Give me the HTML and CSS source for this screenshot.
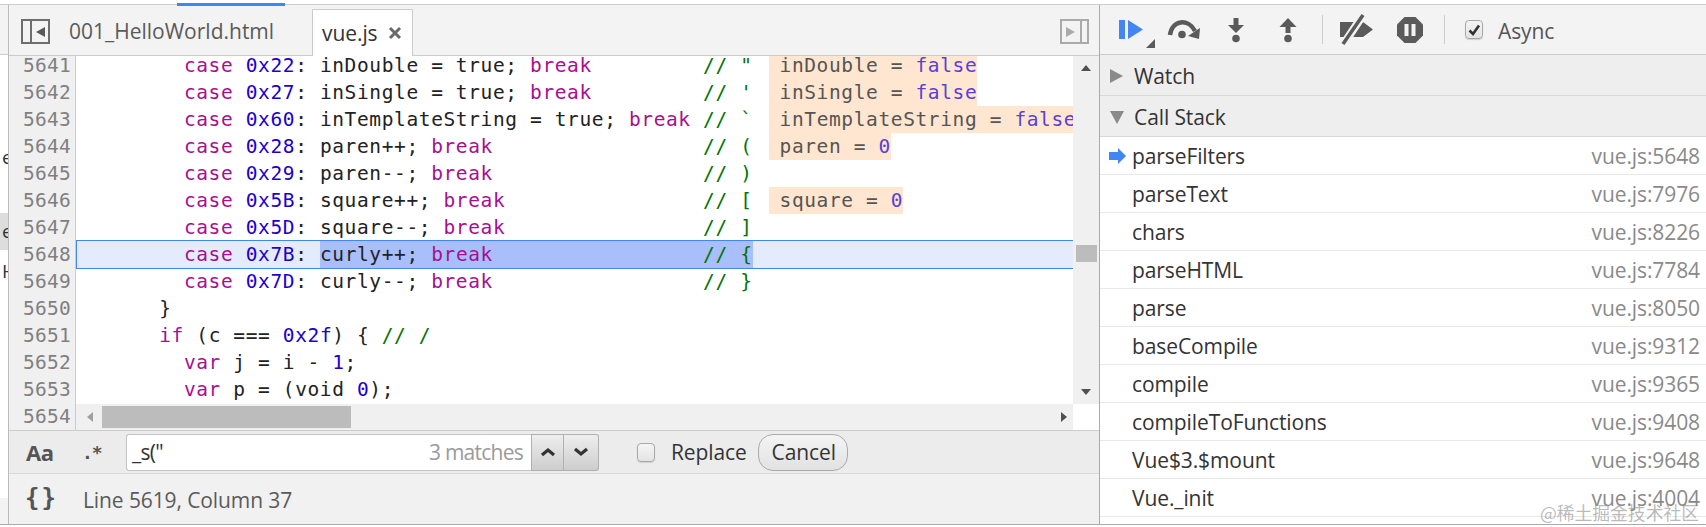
FILE: index.html
```html
<!DOCTYPE html>
<html lang="en">
<head>
  <meta charset="UTF-8" />
  <title>Sources - vue.js</title>
  <link rel="stylesheet" href="styles.css">
</head>
<body>

  <div class="devtabs"><div class="devtab-active"></div></div>

  <div class="main">
    <div class="navigator">
      <div class="nav-head"></div>
      <div class="nav-row nav-row-1">e</div>
      <div class="nav-row nav-row-2">e</div>
      <div class="nav-row nav-row-3">H</div>
      <div class="nav-foot"></div>
    </div>

    <div class="editor">
      <div class="tabbar">
        <svg class="pane-toggle" width="30" height="26" viewBox="0 0 30 26">
          <rect x="1" y="1" width="27" height="23" fill="none" stroke="#6e6e6e" stroke-width="2"/>
          <rect x="9" y="1" width="2" height="23" fill="#6e6e6e"/>
          <polygon points="24,8 24,18 15,13" fill="#5a5a5a"/>
        </svg>
        <div class="file-tab">001_HelloWorld.html</div>
        <div class="file-tab file-tab-active">vue.js
          <svg class="tab-close" width="14" height="14" viewBox="0 0 14 14">
            <path d="M2 2 L12 12 M12 2 L2 12" stroke="#6b6b6b" stroke-width="3"/>
          </svg>
        </div>
        <svg class="pane-toggle pane-toggle-right" width="30" height="26" viewBox="0 0 30 26">
          <rect x="1" y="1" width="27" height="23" fill="none" stroke="#aaa" stroke-width="2"/>
          <rect x="20" y="1" width="2" height="23" fill="#aaa"/>
          <polygon points="6,8 6,18 15,13" fill="#aaa"/>
        </svg>
      </div>

      <div class="source">
        <div class="gutter">
          <div>5641</div><div>5642</div><div>5643</div><div>5644</div><div>5645</div>
          <div>5646</div><div>5647</div><div>5648</div><div>5649</div><div>5650</div>
          <div>5651</div><div>5652</div><div>5653</div><div>5654</div>
        </div>
        <div class="code-col">
          <div class="code-row">
            <div class="code">
<div class="line">        <b>case</b> <i>0x22</i>: inDouble = true; <b>break</b>         <u>// "</u><span class="val">inDouble = <em>false</em></span></div>
<div class="line">        <b>case</b> <i>0x27</i>: inSingle = true; <b>break</b>         <u>// '</u><span class="val">inSingle = <em>false</em></span></div>
<div class="line">        <b>case</b> <i>0x60</i>: inTemplateString = true; <b>break</b> <u>// `</u><span class="val">inTemplateString = <em>false</em></span></div>
<div class="line">        <b>case</b> <i>0x28</i>: paren++; <b>break</b>                 <u>// (</u><span class="val">paren = <em>0</em></span></div>
<div class="line">        <b>case</b> <i>0x29</i>: paren--; <b>break</b>                 <u>// )</u></div>
<div class="line">        <b>case</b> <i>0x5B</i>: square++; <b>break</b>                <u>// [</u><span class="val">square = <em>0</em></span></div>
<div class="line">        <b>case</b> <i>0x5D</i>: square--; <b>break</b>                <u>// ]</u></div>
<div class="line line-current">        <b>case</b> <i>0x7B</i>: <span class="sel">curly++; <b>break</b>                 <u>// {</u></span></div>
<div class="line">        <b>case</b> <i>0x7D</i>: curly--; <b>break</b>                 <u>// }</u></div>
<div class="line">      }</div>
<div class="line">      <b>if</b> (c === <i>0x2f</i>) { <u>// /</u></div>
<div class="line">        <b>var</b> j = i - <i>1</i>;</div>
<div class="line">        <b>var</b> p = (void <i>0</i>);</div>
            </div>
            <div class="vscroll">
              <div class="arrow-up"></div>
              <div class="vthumb"></div>
              <div class="arrow-down"></div>
            </div>
          </div>
          <div class="hscroll">
            <div class="arrow-left"></div>
            <div class="hthumb"></div>
            <div class="arrow-right"></div>
            <div class="scroll-corner"></div>
          </div>
        </div>
      </div>

      <div class="searchbar">
        <div class="aa">Aa</div>
        <div class="regex">.*</div>
        <div class="search-box">
          <span class="search-text">_s("</span>
          <span class="search-count">3 matches</span>
        </div>
        <div class="step-btn step-up">
          <svg width="16" height="10" viewBox="0 0 16 10"><path d="M2 8 L8 3 L14 8" fill="none" stroke="#333" stroke-width="3.2"/></svg>
        </div>
        <div class="step-btn step-down">
          <svg width="16" height="10" viewBox="0 0 16 10"><path d="M2 2 L8 7 L14 2" fill="none" stroke="#333" stroke-width="3.2"/></svg>
        </div>
        <div class="check replace-check"></div>
        <div class="replace-label">Replace</div>
        <div class="cancel">Cancel</div>
      </div>

      <div class="statusbar">
        <div class="pretty">{}</div>
        <div class="cursor-pos">Line 5619, Column 37</div>
      </div>
    </div>

    <div class="debugger">
      <div class="dbg-toolbar">
        <svg class="dbg-btn" width="52" height="49" viewBox="0 0 52 49">
          <rect x="14" y="15" width="6" height="19" fill="#4285f4"/>
          <polygon points="23,15 38,24.5 23,34" fill="#4285f4"/>
          <polygon points="50,34 50,43 41,43" fill="#5a5a5a"/>
        </svg>
        <svg class="dbg-btn" width="52" height="49" viewBox="0 0 52 49">
          <path d="M13 30 C15 15 31 13 38 26" fill="none" stroke="#5a5a5a" stroke-width="4.5"/>
          <polygon points="43,23 42,34 31,31" fill="#5a5a5a"/>
          <circle cx="25" cy="29.5" r="3.8" fill="#5a5a5a"/>
        </svg>
        <svg class="dbg-btn" width="52" height="49" viewBox="0 0 52 49">
          <rect x="24.5" y="13" width="5" height="8" fill="#5a5a5a"/>
          <polygon points="19,20 35,20 27,28" fill="#5a5a5a"/>
          <circle cx="27" cy="33.5" r="3.8" fill="#5a5a5a"/>
        </svg>
        <svg class="dbg-btn" width="52" height="49" viewBox="0 0 52 49">
          <polygon points="27,13 35.5,22 18.5,22" fill="#5a5a5a"/>
          <rect x="24.5" y="21" width="5" height="7" fill="#5a5a5a"/>
          <circle cx="27" cy="33.5" r="3.8" fill="#5a5a5a"/>
        </svg>
        <div class="dbg-sep dbg-sep-1"></div>
        <svg class="dbg-btn dbg-deact" width="52" height="49" viewBox="0 0 52 49">
          <polygon points="10,17 33,17 43,24.5 33,32 10,32" fill="#5a5a5a"/>
          <path d="M13 40 L33 10" stroke="#f3f3f3" stroke-width="8"/>
          <path d="M13 39 L33 10" stroke="#5a5a5a" stroke-width="3.5"/>
        </svg>
        <svg class="dbg-btn dbg-pause" width="52" height="49" viewBox="0 0 52 49">
          <polygon points="20.5,12 31.5,12 39,19.5 39,30.5 31.5,38 20.5,38 13,30.5 13,19.5" fill="#5a5a5a"/>
          <rect x="20.5" y="19" width="4" height="12" fill="#f3f3f3"/>
          <rect x="27.5" y="19" width="4" height="12" fill="#f3f3f3"/>
        </svg>
        <div class="dbg-sep dbg-sep-2"></div>
        <div class="check async-check">
          <svg width="14" height="14" viewBox="0 0 14 14"><path d="M2.5 7.5 L6 11 L12 2.5" fill="none" stroke="#333" stroke-width="2.6"/></svg>
        </div>
        <div class="async-label">Async</div>
      </div>

      <div class="section">
        <svg width="14" height="14" viewBox="0 0 14 14"><polygon points="0,0 13,7 0,14" fill="#8a8a8a"/></svg>
        <span>Watch</span>
      </div>
      <div class="section">
        <svg width="14" height="14" viewBox="0 0 14 14"><polygon points="0,1 14,1 7,14" fill="#8a8a8a"/></svg>
        <span>Call Stack</span>
      </div>

      <div class="stack">
        <div class="frame">
          <svg class="frame-arrow" width="17" height="16" viewBox="0 0 17 16"><polygon points="0,4 9,4 9,0 17,8 9,16 9,12 0,12" fill="#4285f4"/></svg>
          <span>parseFilters</span><span class="loc">vue.js:5648</span>
        </div>
        <div class="frame"><span>parseText</span><span class="loc">vue.js:7976</span></div>
        <div class="frame"><span>chars</span><span class="loc">vue.js:8226</span></div>
        <div class="frame"><span>parseHTML</span><span class="loc">vue.js:7784</span></div>
        <div class="frame"><span>parse</span><span class="loc">vue.js:8050</span></div>
        <div class="frame"><span>baseCompile</span><span class="loc">vue.js:9312</span></div>
        <div class="frame"><span>compile</span><span class="loc">vue.js:9365</span></div>
        <div class="frame"><span>compileToFunctions</span><span class="loc">vue.js:9408</span></div>
        <div class="frame"><span>Vue$3.$mount</span><span class="loc">vue.js:9648</span></div>
        <div class="frame"><span>Vue._init</span><span class="loc">vue.js:4004</span></div>
      </div>
    </div>
  </div>

  <div class="watermark">@稀土掘金技术社区</div>

</body>
</html>
```

FILE: styles.css
```css
:root {
  --ui-font: "Open Sans", "Noto Sans", sans-serif;
  --code-font: "DejaVu Sans Mono", monospace;
  --line: #cccccc;
  --bar-bg: #f3f3f3;
  --blue: #4285f4;
}

* {
  box-sizing: border-box;
}

html, body {
  margin: 0;
  height: 100%;
  overflow: hidden;
  background: #fff;
}

body {
  font-family: var(--ui-font);
  font-size: 21px;
  letter-spacing: -0.1px;
  color: #333;
  position: relative;
}

.devtabs {
  height: 5px;
  border-bottom: 1px solid var(--line);
  padding: 3px 0 0 177px;
}

.devtab-active {
  position: relative;
  width: 108px;
  height: 3px;
  background: var(--blue);
}

.main {
  display: flex;
  height: 520px;
  border-bottom: 1px solid #aaa;
}

/* navigator, only a sliver of it shows */
.navigator {
  width: 9px;
  flex-shrink: 0;
  border-right: 1px solid #bbb;
  display: flex;
  flex-direction: column;
  overflow: hidden;
}

.nav-head {
  height: 50px;
  background: var(--bar-bg);
  border-bottom: 1px solid var(--line);
}

.nav-row {
  height: 37px;
  line-height: 37px;
  width: 8px;
  display: flex;
  justify-content: flex-start;
  padding-left: 2px;
  font-size: 19px;
}

.nav-row-1 { margin-top: 84px; }
.nav-row-2 { margin-top: 37px; background: #dddddd; }
.nav-row-3 { margin-top: 3px; }

.nav-foot {
  margin-top: auto;
  height: 26px;
  background: var(--bar-bg);
}

/* editor */
.editor {
  width: 1091px;
  flex-shrink: 0;
  border-right: 1px solid #aaa;
  display: flex;
  flex-direction: column;
}

.tabbar {
  height: 51px;
  flex-shrink: 0;
  display: flex;
  align-items: flex-end;
  background: var(--bar-bg);
  border-bottom: 1px solid var(--line);
  padding-left: 12px;
}

.pane-toggle {
  align-self: flex-start;
  margin-top: 14px;
}

.pane-toggle-right {
  margin-left: auto;
  margin-right: 9px;
}

.file-tab {
  height: 46px;
  line-height: 44px;
  padding: 0 9px 0 8px;
  margin-left: 10px;
  letter-spacing: 0;
  color: #5a5a5a;
  white-space: nowrap;
}

.file-tab-active {
  display: flex;
  align-items: center;
  gap: 10px;
  width: 101px;
  margin-left: 29px;
  margin-bottom: -1px;
  height: 47px;
  padding-left: 9px;
  letter-spacing: -0.1px;
  color: #333;
  background: #fff;
  border: 1px solid var(--line);
  border-bottom: none;
}

.source {
  height: 374px;
  flex-shrink: 0;
  display: flex;
  overflow: hidden;
}

.gutter {
  width: 67px;
  flex-shrink: 0;
  padding: 0 4px 0 14px;
  margin-top: -4px;
  background: #f0f0f0;
  border-right: 1px solid var(--line);
  font-family: var(--code-font);
  font-size: 19.5px;
  line-height: 27px;
  letter-spacing: 0.3px;
  color: #808080;
  text-align: right;
}

.code-col {
  flex: 1;
  min-width: 0;
  display: flex;
  flex-direction: column;
}

.code-row {
  height: 348px;
  display: flex;
}

.code {
  flex: 1;
  min-width: 0;
  margin-top: -4px;
  overflow: hidden;
  font-family: var(--code-font);
  font-size: 19.5px;
  letter-spacing: 0.62px;
  line-height: 27px;
  color: #222;
  background: #fff;
}

.line {
  height: 27px;
  padding-left: 9px;
  white-space: pre;
}

.line-current {
  background: #e4ebfd;
  box-shadow: 0 -1px 0 var(--blue), 0 1px 0 var(--blue), inset 1px 0 0 var(--blue);
}

.code b { font-weight: normal; color: #aa0d91; }
.code i { font-style: normal; color: #1c00cf; }
.code u { text-decoration: none; color: #007400; }

.sel {
  display: inline-block;
  height: 27px;
  vertical-align: top;
  background: #a8bffb;
}

.val {
  display: inline-block;
  height: 27px;
  vertical-align: top;
  margin-left: 16px;
  padding-left: 11px;
  color: #555;
  background: #ffe6d0;
}

.val em {
  font-style: normal;
  color: #5a3fd8;
}

.vscroll {
  width: 26px;
  flex-shrink: 0;
  display: flex;
  flex-direction: column;
  align-items: center;
  background: #f0f0f0;
  position: relative;
}

.arrow-up {
  margin-top: 9px;
  border: 5.5px solid transparent;
  border-top: none;
  border-bottom: 6px solid #505050;
}

.vthumb {
  width: 21px;
  height: 17px;
  margin-top: 174px;
  background: #bcbcbc;
}

.arrow-down {
  margin-top: auto;
  margin-bottom: 9px;
  border: 5.5px solid transparent;
  border-bottom: none;
  border-top: 6px solid #505050;
}

.hscroll {
  height: 26px;
  display: flex;
  align-items: center;
  background: #f0f0f0;
  padding-left: 11px;
}

.arrow-left {
  border: 5.5px solid transparent;
  border-left: none;
  border-right: 6px solid #a0a0a0;
}

.hthumb {
  width: 249px;
  height: 22px;
  margin-left: 9px;
  background: #bcbcbc;
}

.arrow-right {
  margin-left: auto;
  margin-right: 6px;
  border: 5.5px solid transparent;
  border-right: none;
  border-left: 6px solid #505050;
}

.scroll-corner {
  width: 26px;
  height: 26px;
  background: #fff;
}

/* search bar */
.searchbar {
  height: 44px;
  flex-shrink: 0;
  display: flex;
  align-items: center;
  background: #ececec;
  border-top: 1px solid var(--line);
  border-bottom: 1px solid #d8d8d8;
  padding-left: 17px;
}

.aa {
  width: 56px;
  font-weight: 700;
  font-size: 22px;
  letter-spacing: -0.5px;
  color: #555;
}

.regex {
  width: 44px;
  font-family: var(--code-font);
  font-weight: 700;
  font-size: 18px;
  letter-spacing: -1px;
  color: #555;
}

.search-box {
  width: 405px;
  height: 37px;
  display: flex;
  align-items: center;
  justify-content: space-between;
  padding: 0 8px 0 5px;
  background: #fff;
  border: 1px solid #c4c4c4;
  border-right: none;
  border-radius: 3px 0 0 3px;
  letter-spacing: -0.75px;
}

.search-count {
  color: #9a9a9a;
}

.step-btn {
  height: 37px;
  display: flex;
  align-items: center;
  justify-content: center;
  background: linear-gradient(#eeeeee, #cdcdcd);
  border: 1px solid #b0b0b0;
}

.step-up { width: 33px; }

.step-down {
  width: 35px;
  border-left: none;
  border-radius: 0 3px 3px 0;
}

.check {
  width: 18px;
  height: 19px;
  display: flex;
  align-items: center;
  justify-content: center;
  border: 1px solid #a8a8a8;
  border-radius: 4px;
  background: linear-gradient(#f5f5f5, #e4e4e4);
  box-shadow: 0 1px 1px #d0d0d0;
}

.replace-check { margin-left: 38px; }

.replace-label {
  margin-left: 16px;
  color: #333;
}

.cancel {
  width: 90px;
  height: 37px;
  margin-left: 11px;
  line-height: 35px;
  padding-left: 2px;
  text-align: center;
  border: 1px solid #aaa;
  border-radius: 15px;
  background: linear-gradient(#f4f4f4, #e2e2e2);
}

.statusbar {
  flex: 1;
  display: flex;
  align-items: center;
  background: #f1f1f1;
  padding-left: 16px;
}

.pretty {
  width: 58px;
  margin-top: -3px;
  font-family: var(--code-font);
  font-weight: 700;
  font-size: 24px;
  letter-spacing: 2px;
  color: #555;
}

.cursor-pos {
  margin-top: 2px;
  color: #5a5a5a;
}

/* debugger sidebar */
.debugger {
  flex: 1;
  min-width: 0;
  display: flex;
  flex-direction: column;
}

.dbg-toolbar {
  height: 50px;
  flex-shrink: 0;
  display: flex;
  align-items: center;
  background: var(--bar-bg);
  border-bottom: 1px solid var(--line);
  padding-left: 5px;
}

.dbg-sep {
  width: 1px;
  height: 29px;
  background: var(--line);
}

.dbg-sep-1 { margin: 0 7px 0 9px; }
.dbg-pause { margin-left: 2px; }
.dbg-sep-2 { margin-left: 8px; }

.async-check { margin-left: 20px; }

.async-label {
  margin: 2px 0 0 15px;
  color: #555;
}

.section {
  height: 41px;
  flex-shrink: 0;
  display: flex;
  align-items: center;
  gap: 10px;
  padding: 2px 0 0 10px;
  background: #eeeeee;
  border-bottom: 1px solid #d8d8d8;
}

.frame {
  position: relative;
  height: 38px;
  display: flex;
  align-items: center;
  justify-content: space-between;
  padding: 1px 6px 0 32px;
  border-bottom: 1px solid #e8e8e8;
  white-space: nowrap;
}

.frame-arrow {
  position: absolute;
  left: 9px;
  top: 11px;
}

.loc {
  color: #8a8a8a;
}

.watermark {
  position: absolute;
  right: 7px;
  top: 499px;
  font-family: "Noto Sans CJK SC", sans-serif;
  font-size: 17.8px;
  letter-spacing: 0;
  color: rgba(140, 140, 140, 0.6);
}
```
